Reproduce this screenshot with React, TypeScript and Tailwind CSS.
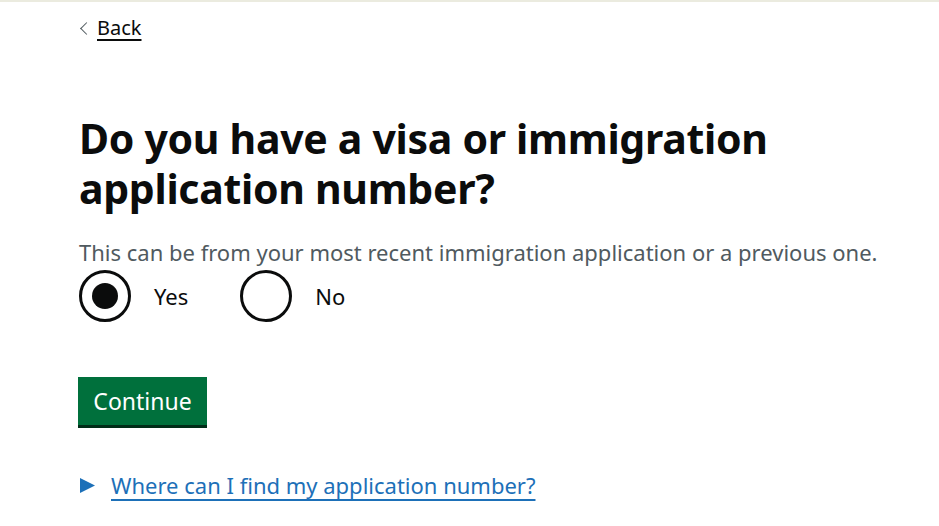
import React from "react";

export default function App() {
  const font = { fontFamily: '"Noto Sans", "Open Sans", Arial, sans-serif' };
  return (
    <div className="w-[939px] h-[526px] bg-white border-t-2 border-[#ebebdf] overflow-hidden text-[#0b0c0c]" style={font}>
      <div className="pl-[79px] pt-[12px]">
        <a href="#" className="flex items-center gap-[6px] text-[20px] leading-[28px] text-[#0b0c0c]">
          <span className="inline-block w-[9px] h-[9px] border-l-[1.5px] border-b-[1.5px] border-[#505a5f] rotate-45 ml-[3px]" />
          <span className="underline underline-offset-[4px] decoration-[1.5px]">Back</span>
        </a>
        <h1 className="mt-[71px] text-[41px] leading-[50px] font-bold tracking-[-0.3px]">
          <span className="block">Do you have a visa or immigration</span>
          <span className="block">application number?</span>
        </h1>
        <p className="mt-[25px] text-[22px] leading-[28px] text-[#505a5f]">
          This can be from your most recent immigration application or a previous one.
        </p>
        <div className="mt-[4px] flex items-center">
          <label className="flex items-center">
            <span className="w-[52px] h-[52px] rounded-full border-[3px] border-[#0b0c0c] flex items-center justify-center">
              <span className="w-[26px] h-[26px] rounded-full bg-[#0b0c0c]" />
            </span>
            <span className="ml-[23px] text-[22px]">Yes</span>
          </label>
          <label className="flex items-center ml-[52px]">
            <span className="w-[52px] h-[52px] rounded-full border-[3px] border-[#0b0c0c]" />
            <span className="ml-[23px] text-[22px]">No</span>
          </label>
        </div>
        <button className="-ml-[1px] mt-[55px] w-[129px] h-[48px] bg-[#00703c] text-white text-[23px] shadow-[0_3px_0_#002d18] flex items-center justify-center">
          Continue
        </button>
        <div className="mt-[45px] flex items-center">
          <svg width="15" height="15" viewBox="0 0 15 15" className="ml-[1px]">
            <polygon points="0,0 15,7.5 0,15" fill="#1d70b8" />
          </svg>
          <a href="#" className="ml-[16px] text-[22px] leading-[30px] text-[#1d70b8] underline underline-offset-[5px] decoration-[1.5px]">
            Where can I find my application number?
          </a>
        </div>
      </div>
    </div>
  );
}
